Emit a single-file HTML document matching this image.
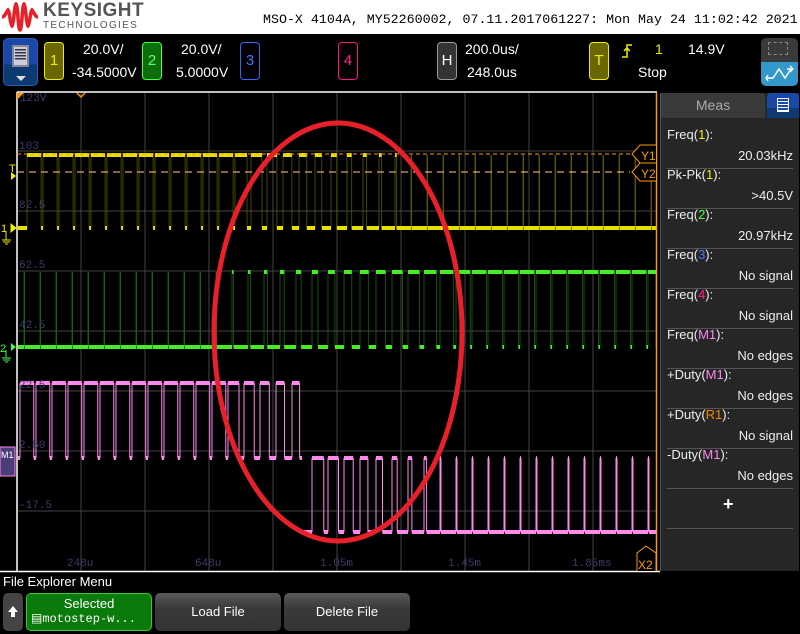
<!DOCTYPE html>
<html><head><meta charset="utf-8">
<style>
*{margin:0;padding:0;box-sizing:border-box}
body{width:800px;height:632px;background:#000;position:relative;overflow:hidden;font-family:"Liberation Sans",sans-serif;color:#fff}
.a{position:absolute}
.t{font-size:14px;white-space:nowrap}
.box{position:absolute;width:20px;height:38px;border-radius:4px;border:1.5px solid;text-align:center;line-height:36px;font-size:15px}
.lab{position:absolute;font-family:"Liberation Mono",monospace;font-size:11px;color:#3c3c6a}
.mp .l{position:absolute;left:6px;font-size:13px;color:#eee}
.mp .v{position:absolute;right:6px;font-size:13px;color:#eee}
.mp .s{position:absolute;left:6px;right:6px;height:1px;background:#555}
.btn{position:absolute;top:593px;height:38px;border-radius:5px;background:linear-gradient(#5a5a5a,#3a3a3a 40%,#333);text-align:center;color:#fff;font-size:13px}
</style></head><body>
<div class="a" style="left:0;top:0;width:800px;height:34px;background:#fff"></div>
<svg class="a" style="left:2px;top:2px" width="36" height="30" viewBox="0 0 36 30"><path d="M0,15 C3,15 4,10 6,8 C8,10 8,22 10,24 C12,22 12,4 14,2 C16,4 16,28 18,28 C20,28 20,4 22,2 C24,4 24,22 26,24 C28,22 28,10 30,8 C32,10 33,15 36,15" fill="none" stroke="#e8202a" stroke-width="3.5"/></svg>
<div class="a" style="left:43px;top:0px;font-size:19px;font-weight:bold;color:#555;letter-spacing:0.5px">KEYSIGHT</div>
<div class="a" style="left:43px;top:20px;font-size:10px;color:#555;letter-spacing:1.3px">TECHNOLOGIES</div>
<div class="a" style="left:263px;top:12px;font-family:'Liberation Mono',monospace;font-size:13.3px;color:#000;white-space:nowrap">MSO-X 4104A, MY52260002, 07.11.2017061227: Mon May 24 11:02:42 2021</div>

<div class="a" style="left:3px;top:38px;width:35px;height:48px;border-radius:5px;background:linear-gradient(#1a48a8 55%,#0e3a72 55%);border:1px solid #2a5ab8"></div>
<div class="a" style="left:12px;top:45px;width:17px;height:22px;background:#ccd;border:2px solid #889"></div>
<div class="a" style="left:15px;top:49px;width:11px;height:11px;background:repeating-linear-gradient(#334 0 1.5px,#ccd 1.5px 3px)"></div>
<div class="a" style="left:16px;top:76px;width:0;height:0;border-left:5px solid transparent;border-right:5px solid transparent;border-top:5px solid #ddd"></div>

<div class="box" style="left:44px;top:42px;background:#6a6600;border-color:#ee0;color:#ee0">1</div>
<div class="a t" style="left:83px;top:41px">20.0V/</div>
<div class="a t" style="left:72px;top:64px">-34.5000V</div>
<div class="box" style="left:142px;top:42px;background:#0b6e0b;border-color:#4f4;color:#6f6">2</div>
<div class="a t" style="left:181px;top:41px">20.0V/</div>
<div class="a t" style="left:176px;top:64px">5.0000V</div>
<div class="box" style="left:240px;top:42px;border-color:#36f;color:#47f">3</div>
<div class="box" style="left:338px;top:42px;border-color:#f18;color:#f28">4</div>
<div class="box" style="left:437px;top:42px;background:#333;border-color:#999;color:#fff">H</div>
<div class="a t" style="left:465px;top:41px">200.0us/</div>
<div class="a t" style="left:467px;top:64px">248.0us</div>
<div class="box" style="left:589px;top:42px;background:#6a6600;border-color:#ee0;color:#ee0">T</div>
<svg class="a" style="left:621px;top:44px" width="12" height="14"><path d="M1,13 H6 V1 H11 M3,7 L6,4 L9,7" fill="none" stroke="#ee0" stroke-width="1.5"/></svg>
<div class="a t" style="left:655px;top:41px;color:#ee0">1</div>
<div class="a t" style="left:688px;top:41px">14.9V</div>
<div class="a t" style="left:638px;top:64px">Stop</div>
<div class="a" style="left:761px;top:38px;width:37px;height:24px;background:#3a3a3a;border-radius:5px 5px 0 0"></div>
<div class="a" style="left:768px;top:42px;width:20px;height:13px;border:1px dashed #888"></div>
<div class="a" style="left:761px;top:62px;width:37px;height:24px;background:#3399cc;border-radius:0 0 5px 5px"></div>
<svg class="a" style="left:765px;top:64px" width="30" height="20"><path d="M2,14 L8,14 L14,5 L20,14 L26,5 M22,5 H28" fill="none" stroke="#fff" stroke-width="1.5"/><path d="M3,11 L1,14 L3,17 M25,2 L28,5 L25,8" fill="none" stroke="#fff" stroke-width="1.3"/></svg>

<svg class="a" style="left:0;top:0" width="800" height="632">
<g stroke="#444" stroke-width="1">
<path d="M81,93V571M145,93V571M209,93V571M273,93V571M337,93V571M401,93V571M465,93V571M529,93V571M593,93V571M17,151H657M17,211H657M17,271H657M17,331H657M17,391H657M17,451H657M17,511H657"/>
</g>
<g id="tr"></g>
<path d="M17,92H657M17,92V571M0,571.5H660" stroke="#fff" stroke-width="1.5"/>
<path d="M656.5,92V571" stroke="#f90" stroke-width="1.5"/>
<path d="M17,154H630" stroke="#f90" stroke-width="1" stroke-dasharray="4,3"/>
<path d="M17,172H630" stroke="#fc8" stroke-width="1" stroke-dasharray="7,5"/>
<path d="M656,145H640L632,154L640,163H656M656,163H640L632,172L640,181H656" fill="#000" stroke="#f90"/>
<text x="641" y="160" fill="#f90" font-size="12" font-family="Liberation Sans">Y1</text>
<text x="641" y="178" fill="#f90" font-size="12" font-family="Liberation Sans">Y2</text>
<path d="M637,571V553L646,546L656,553V571" fill="#000" stroke="#f90"/>
<text x="638" y="569" fill="#f90" font-size="12" font-family="Liberation Sans">X2</text>
<path d="M17,93h7l-7,7z" fill="#f90"/>
<path d="M77,93l4,4l4,-4" fill="none" stroke="#f90" stroke-width="1.5"/>
<ellipse cx="338" cy="332" rx="124" ry="209" fill="none" stroke="#e8202a" stroke-width="5"/>
<text x="9" y="172" fill="#ee0" font-size="11" font-family="Liberation Sans">T</text>
<path d="M11,172l5,4l-5,4z" fill="#ee0"/>
<text x="1" y="232" fill="#ee0" font-size="11" font-family="Liberation Sans">1</text>
<path d="M12,228l5,0M11,224l5,4l-5,4z" fill="#ee0" stroke="#ee0"/>
<path d="M6,232v8M2,240h9M3,242h7M5,244h3" stroke="#ee0"/>
<text x="0" y="352" fill="#4f4" font-size="11" font-family="Liberation Sans">2</text>
<path d="M11,343l5,4l-5,4z" fill="#4f4"/>
<path d="M6,350v8M2,358h9M3,360h7M5,362h3" stroke="#4f4"/>
<rect x="0" y="447" width="15" height="29" fill="#4a3d78" stroke="#f8e" stroke-width="1"/>
<text x="1" y="458" fill="#fff" font-size="9" font-family="Liberation Sans">M1</text>
</svg>

<div class="lab" style="left:20px;top:93px">123V</div>
<div class="lab" style="left:19px;top:141px">103</div>
<div class="lab" style="left:19px;top:200px">82.5</div>
<div class="lab" style="left:19px;top:260px">62.5</div>
<div class="lab" style="left:19px;top:320px">42.5</div>
<div class="lab" style="left:19px;top:380px">22.5</div>
<div class="lab" style="left:19px;top:440px">2.50</div>
<div class="lab" style="left:19px;top:500px">-17.5</div>
<div class="lab" style="left:67px;top:558px">248u</div>
<div class="lab" style="left:195px;top:558px">648u</div>
<div class="lab" style="left:320px;top:558px">1.05m</div>
<div class="lab" style="left:448px;top:558px">1.45m</div>
<div class="lab" style="left:572px;top:558px">1.85ms</div>

<div class="a mp" style="left:660px;top:93px;width:139px;height:478px;background:#262626;border-left:1px solid #555">
<div class="a" style="left:0;top:0;width:104px;height:25px;background:#3a3a3a;border-radius:0 4px 0 0;text-align:center;line-height:25px;font-size:14px;color:#aaa">Meas</div>
<div class="a" style="left:106px;top:0;width:32px;height:25px;background:linear-gradient(#1a48a8 60%,#0e3a72 60%);border-radius:4px 4px 0 0"></div>
<div class="a" style="left:116px;top:5px;width:12px;height:14px;border:1.5px solid #fff;background:repeating-linear-gradient(#1a48a8 0 2px,#fff 2px 3px)"></div>
<div class="l" style="top:34px">Freq(<span style="color:#ee0">1</span>):</div><div class="v" style="top:55px">20.03kHz</div><div class="s" style="top:75px"></div>
<div class="l" style="top:74px">Pk-Pk(<span style="color:#ee0">1</span>):</div><div class="v" style="top:95px">&gt;40.5V</div><div class="s" style="top:115px"></div>
<div class="l" style="top:114px">Freq(<span style="color:#4f4">2</span>):</div><div class="v" style="top:135px">20.97kHz</div><div class="s" style="top:155px"></div>
<div class="l" style="top:154px">Freq(<span style="color:#47f">3</span>):</div><div class="v" style="top:175px">No signal</div><div class="s" style="top:195px"></div>
<div class="l" style="top:194px">Freq(<span style="color:#f28">4</span>):</div><div class="v" style="top:215px">No signal</div><div class="s" style="top:235px"></div>
<div class="l" style="top:234px">Freq(<span style="color:#f8e">M1</span>):</div><div class="v" style="top:255px">No edges</div><div class="s" style="top:275px"></div>
<div class="l" style="top:274px">+Duty(<span style="color:#f8e">M1</span>):</div><div class="v" style="top:295px">No edges</div><div class="s" style="top:315px"></div>
<div class="l" style="top:314px">+Duty(<span style="color:#e80">R1</span>):</div><div class="v" style="top:335px">No signal</div><div class="s" style="top:355px"></div>
<div class="l" style="top:354px">-Duty(<span style="color:#f8e">M1</span>):</div><div class="v" style="top:375px">No edges</div><div class="s" style="top:395px"></div>
<div class="a" style="left:62px;top:401px;font-size:18px;font-weight:bold">+</div>
<div class="s" style="top:435px"></div>
</div>

<div class="a" style="left:3px;top:574px;font-size:13px">File Explorer Menu</div>
<div class="btn" style="left:3px;width:20px;background:#444"><svg width="20" height="38"><path d="M10,13l-5,6h3v5h4v-5h3z" fill="#fff"/></svg></div>
<div class="btn" style="left:26px;width:126px;background:#0a7a0a;border:1px solid #3c3"><div style="margin-top:2px">Selected</div><div style="font-family:'Liberation Mono',monospace;font-size:12px;text-align:left;padding-left:4px">&#9636;motostep-w...</div></div>
<div class="btn" style="left:155px;width:126px;line-height:38px">Load File</div>
<div class="btn" style="left:284px;width:126px;line-height:38px">Delete File</div>

<script>
var g=document.getElementById('tr'),s='';
function lerp(x,a,b,da,db){if(x<=a)return da;if(x>=b)return db;return da+(db-da)*(x-a)/(b-a);}
function trace(hi,lo,col,dim,vw,duty,x0,x1,ph){
 var h='',v='';
 var first=true;
 for(var x=x0+ph;x<x1;x+=16){
  var f=duty(x),w=16*f;var xe=Math.min(x+w,x1);
  if(first){h+='M'+x0+','+lo+'H'+x;first=false;}
  if(w>0.8)h+='M'+x.toFixed(1)+','+hi+'H'+xe.toFixed(1);
  var le=Math.min(x+16,x1);
  if(le-xe>0.8)h+='M'+xe.toFixed(1)+','+lo+'H'+le.toFixed(1);
  v+='M'+x.toFixed(1)+','+hi+'V'+lo+'M'+xe.toFixed(1)+','+hi+'V'+lo;
 }
 s+='<path d="'+v+'" stroke="'+dim+'" stroke-width="'+vw+'"/>';
 s+='<path d="'+h+'" stroke="'+col+'" stroke-width="4"/>';
}
trace(155,228,'#e8e000','#5a5600',0.8,function(x){return x<235?0.88:x<400?lerp(x,235,400,0.75,0.08):0.04},18,656,9);
trace(272,347,'#44ee22','#1e6010',0.8,function(x){return x<228?0.04:x<460?lerp(x,228,460,0.08,0.9):0.9},18,656,6);
trace(383,458,'#ff88ee','#ff88ee',1,function(x){return x<225?0.86:lerp(x,225,300,0.7,0.45)},18,302,2);
trace(458,532,'#ff88ee','#ff88ee',1,function(x){return x<300?0.9:x<440?lerp(x,300,440,0.8,0.08):0.06},302,656,10);
g.innerHTML=s;
</script>
</body></html>
